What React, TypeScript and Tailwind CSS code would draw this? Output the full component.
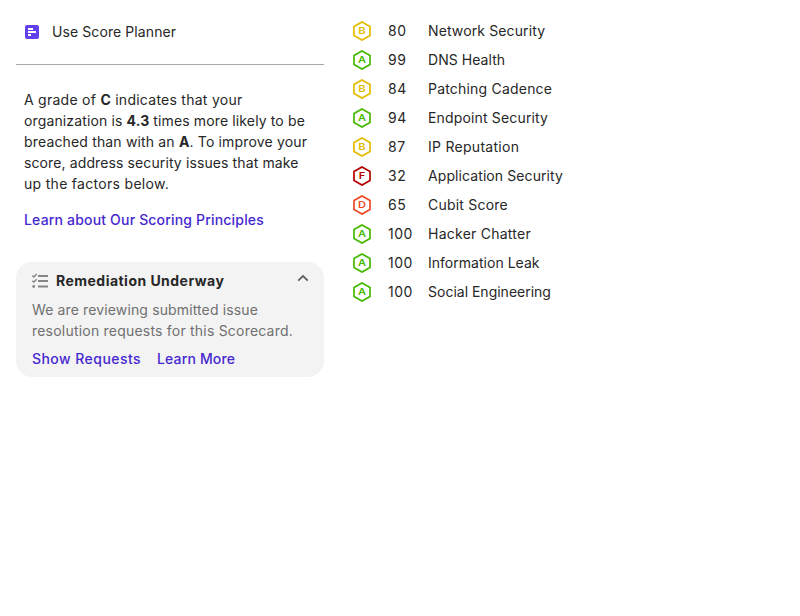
const factors: [string, number, string, string][] = [
  ['B', 80, 'Network Security', 'tracking-[.12px]'],
  ['A', 99, 'DNS Health', 'tracking-[.05px]'],
  ['B', 84, 'Patching Cadence', 'tracking-[.2px]'],
  ['A', 94, 'Endpoint Security', 'tracking-[.16px]'],
  ['B', 87, 'IP Reputation', 'tracking-[.28px]'],
  ['F', 32, 'Application Security', 'tracking-[.09px]'],
  ['D', 65, 'Cubit Score', 'tracking-[.22px]'],
  ['A', 100, 'Hacker Chatter', 'tracking-[.25px]'],
  ['A', 100, 'Information Leak', 'tracking-[.02px]'],
  ['A', 100, 'Social Engineering', 'tracking-normal'],
];

const gradeColors: Record<string, string> = {
  A: 'text-[#46b900]',
  B: 'text-[#e5bb00]',
  D: 'text-[#ef4823]',
  F: 'text-[#b50000]',
};

const letterWidths: Record<string, number> = { A: 8, B: 7.4, D: 8, F: 6.6 };

function Grade({ letter }: { letter: string }) {
  return (
    <svg width="20" height="20" viewBox="0 0 20 20" className={gradeColors[letter]}>
      <path d="M10 .9 18 5.400v9.200L10 19.100 2 14.600V5.400Z" fill="none" stroke="currentColor" strokeWidth="1.7" />
      <text x="10" y="13.200" textAnchor="middle" fontSize="9" fontWeight="600" fill="currentColor" textLength={letterWidths[letter]} lengthAdjust="spacingAndGlyphs">{letter}</text>
    </svg>
  );
}

export default function App() {
  return (
    <div className="flex h-[616px] gap-7 bg-white px-4 font-['Inter',sans-serif] text-[14px] leading-[21px] text-[#272727]">
      <div className="w-[308px]">
        <div className="flex h-[65px] items-center gap-3 border-b border-[#a8a8a8] px-2">
          <svg width="16" height="16" viewBox="0 0 16 16">
            <rect x="1" y="1" width="14" height="14" rx="2" fill="#6240ee" />
            <path d="M4 5h5M4 8h8M4 11h3" stroke="#fff" strokeWidth="2" />
          </svg>
          <span className="-mt-0.5 tracking-[.09px]">Use Score Planner</span>
        </div>
        <p className="mt-6 px-2 whitespace-nowrap">
          <span className="tracking-[.26px]">A grade of <b>C</b> indicates that your</span><br />
          <span className="tracking-[.13px]">organization is <b>4.3</b> times more likely to be</span><br />
          <span className="tracking-[.16px]">breached than with an <b>A</b>. To improve your</span><br />
          <span className="tracking-[.11px]">score, address security issues that make</span><br />
          <span className="tracking-[.3px]">up the factors below.</span>
        </p>
        <a className="mt-[15px] block px-2 font-medium tracking-[.18px] text-[#4628d0]">Learn about Our Scoring Principles</a>
        <section className="mt-8 h-[115px] rounded-2xl bg-[#f3f3f3] px-4 pt-2">
          <div className="flex items-center">
            <svg width="16" height="16" viewBox="0 0 16 16" fill="none" stroke="#858585" strokeWidth="1.8">
              <path d="M6 3h10M6 8h10M6 13.500h10" />
              <path d="m.4 2.600 1.400 1.300L4.600 1M.4 7.800l1.400 1.300L4.600 6.200" strokeWidth="1.4" />
              <circle cx="1.700" cy="13.500" r="1.400" fill="#858585" stroke="none" />
            </svg>
            <b className="ml-2 flex-1 tracking-[.47px]">Remediation Underway</b>
            <svg width="10" height="16" viewBox="0 0 10 16" fill="none" stroke="#606060" strokeWidth="1.8" overflow="visible">
              <path d="m.2 7.600 4.800-4.600 4.800 4.600" />
            </svg>
          </div>
          <p className="mt-2 whitespace-nowrap text-[#707070]">
            <span className="tracking-[.13px]">We are reviewing submitted issue</span><br />
            <span className="tracking-[.21px]">resolution requests for this Scorecard.</span>
          </p>
          <div className="mt-[7px] flex gap-4 font-medium text-[#4628d0]">
            <a className="tracking-[.45px]">Show Requests</a>
            <a className="tracking-[.15px]">Learn More</a>
          </div>
        </section>
      </div>
      <ul className="pt-4">
        {factors.map(([letter, score, name, tracking]) => (
          <li key={name} className="flex h-[29px] items-center">
            <Grade letter={letter} />
            <span className="ml-4 w-10 tracking-[.5px]">{score}</span>
            <span className={tracking}>{name}</span>
          </li>
        ))}
      </ul>
    </div>
  );
}
